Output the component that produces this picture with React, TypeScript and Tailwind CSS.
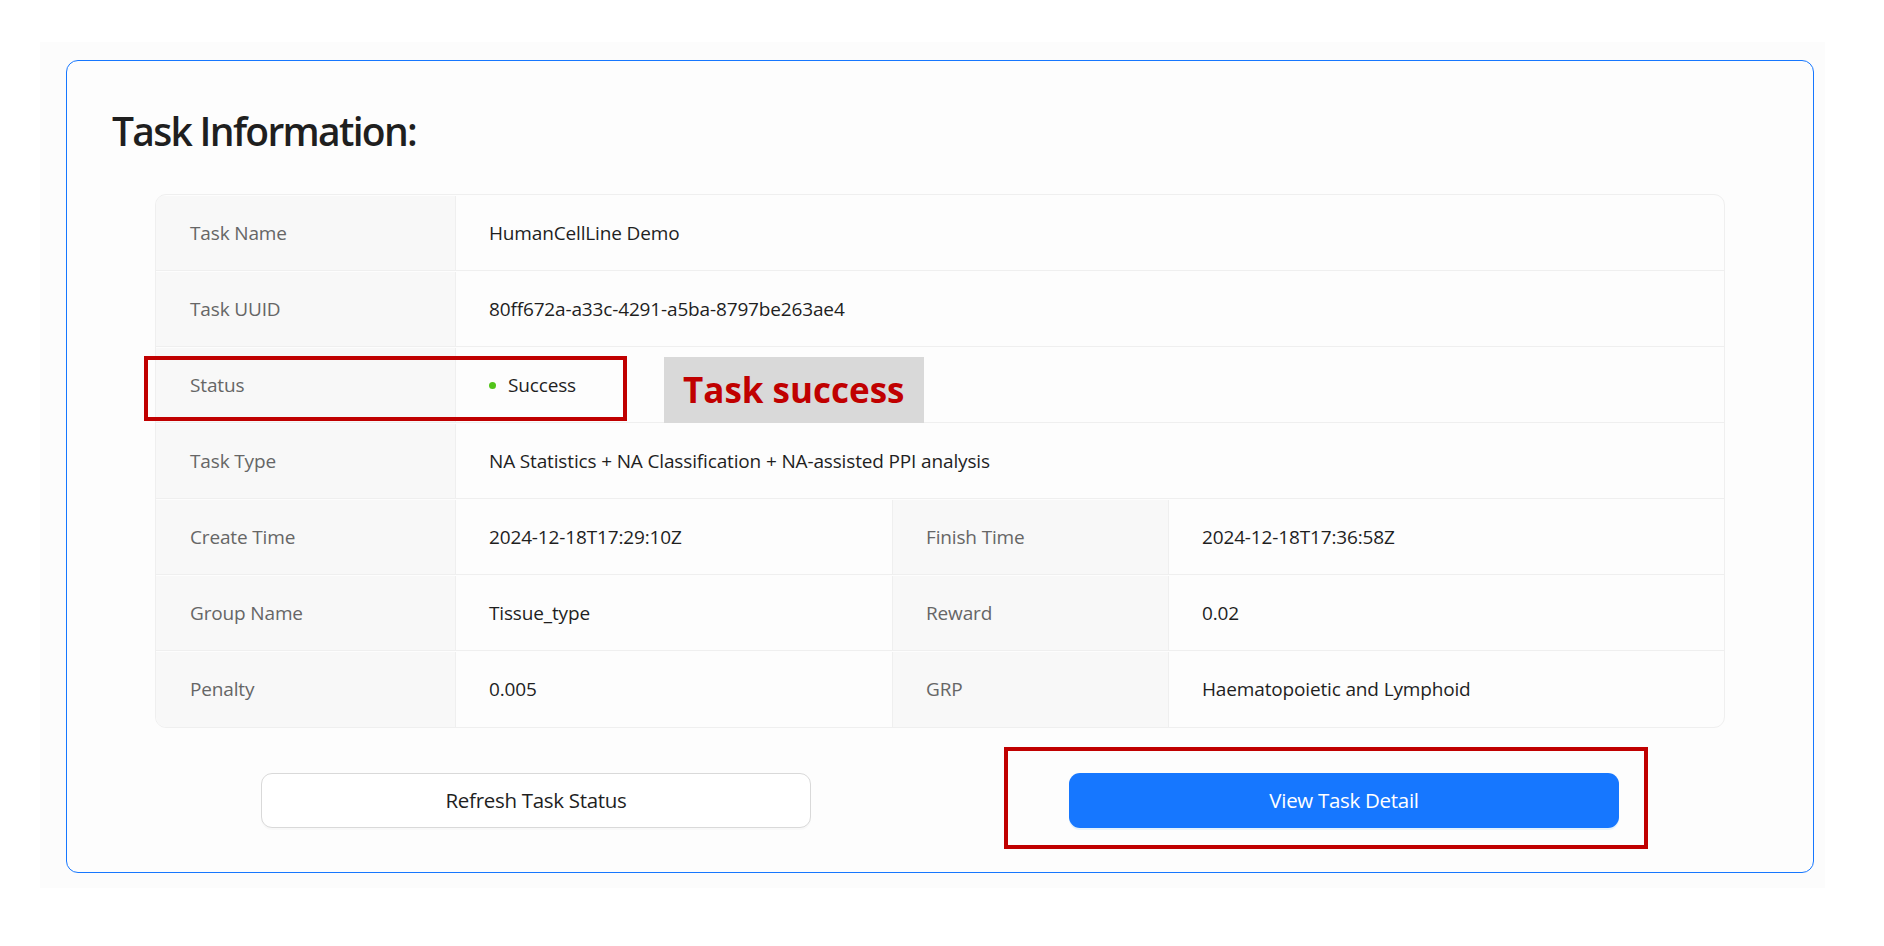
import React from 'react';

const font = { fontFamily: '"Open Sans", "Noto Sans", sans-serif' };

type Cell = { label: string; value: React.ReactNode };

const rows: Cell[][] = [
  [{ label: 'Task Name', value: 'HumanCellLine Demo' }],
  [{ label: 'Task UUID', value: '80ff672a-a33c-4291-a5ba-8797be263ae4' }],
  [
    {
      label: 'Status',
      value: (
        <span className="flex items-center gap-[12px]">
          <span className="inline-block h-[7px] w-[7px] rounded-full bg-[#52c41a]" />
          Success
        </span>
      ),
    },
  ],
  [{ label: 'Task Type', value: 'NA Statistics + NA Classification + NA-assisted PPI analysis' }],
  [
    { label: 'Create Time', value: '2024-12-18T17:29:10Z' },
    { label: 'Finish Time', value: '2024-12-18T17:36:58Z' },
  ],
  [
    { label: 'Group Name', value: 'Tissue_type' },
    { label: 'Reward', value: '0.02' },
  ],
  [
    { label: 'Penalty', value: '0.005' },
    { label: 'GRP', value: 'Haematopoietic and Lymphoid' },
  ],
];

const App = () => {
  return (
    <div className="relative min-h-screen bg-white pl-[40px] pt-[42px]" style={font}>
      <div className="w-[1785px] h-[846px] bg-[#fcfcfc] pl-[26px] pt-[18px]">
        <div className="w-[1748px] rounded-[12px] border-[1.5px] border-[#1677ff] bg-[#fdfdfd] pt-[41px] pb-[44px]">
          <h2 className="ml-[45px] text-[39px] leading-[57px] font-semibold text-[#1f1f1f] tracking-[-1.7px]">
            Task Information:
          </h2>

          <div className="mx-[88px] mt-[35px] overflow-hidden rounded-[11px] border border-[#efefef]">
            {rows.map((row, i) => (
              <div
                key={i}
                className={`flex h-[76px] pt-[1px] text-[19px] tracking-[-0.15px] ${i < rows.length - 1 ? 'border-b border-[#efefef]' : ''}`}
              >
                <div className="flex w-[300px] shrink-0 items-center border-r border-[#efefef] bg-[#f8f8f8] pl-[34px] text-[#666666]">
                  {row[0].label}
                </div>
                {row.length === 1 ? (
                  <div className="flex flex-1 items-center pl-[33px] text-[#1f1f1f]">
                    {row[0].value}
                  </div>
                ) : (
                  <>
                    <div className="flex w-[437px] shrink-0 items-center border-r border-[#efefef] pl-[33px] text-[#1f1f1f]">
                      {row[0].value}
                    </div>
                    <div className="flex w-[276px] shrink-0 items-center border-r border-[#efefef] bg-[#f8f8f8] pl-[33px] text-[#666666]">
                      {row[1].label}
                    </div>
                    <div className="flex flex-1 items-center pl-[33px] text-[#1f1f1f]">
                      {row[1].value}
                    </div>
                  </>
                )}
              </div>
            ))}
          </div>

          <div className="mx-[65px] mt-[45px] grid grid-cols-2">
            <div className="flex justify-center">
              <button className="h-[55px] w-[550px] rounded-[11px] border border-[#d9d9d9] bg-white text-[20.5px] tracking-[-0.3px] text-[#1f1f1f] shadow-[0_2px_0_rgba(0,0,0,0.02)]">
                Refresh Task Status
              </button>
            </div>
            <div className="flex justify-center">
              <button className="h-[55px] w-[550px] rounded-[11px] bg-[#1677ff] text-[20.5px] tracking-[-0.3px] text-white shadow-[0_2px_0_rgba(5,145,255,0.1)]">
                View Task Detail
              </button>
            </div>
          </div>
        </div>
      </div>

      {/* annotation overlays */}
      <div className="absolute left-[144px] top-[356px] h-[65px] w-[483px] border-[4px] border-[#c00000]" />
      <div className="absolute left-[664px] top-[357px] flex h-[66px] w-[260px] items-center bg-[#d9d9d9] pl-[19px]">
        <span className="text-[35px] font-bold text-[#c00000]">Task success</span>
      </div>
      <div className="absolute left-[1004px] top-[747px] h-[102px] w-[644px] border-[4px] border-[#c00000]" />
    </div>
  );
};

export default App;
